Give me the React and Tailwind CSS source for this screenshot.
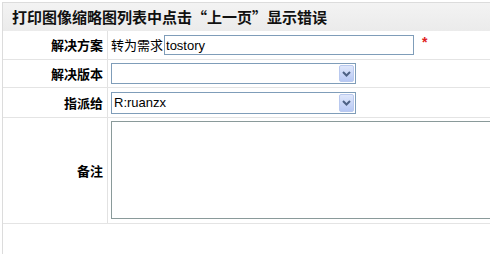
import React from 'react';

const cjk = { fontFamily: '"Noto Sans CJK SC", "Liberation Sans", sans-serif' };

const Chevron = () => (
  <svg width="9" height="6" viewBox="0 0 9 6">
    <path d="M1 1 L4.5 4.5 L8 1" fill="none" stroke="#4d6185" strokeWidth="2" />
  </svg>
);

const Select = ({ value, h }) => (
  <div className={`flex w-[245px] ${h} border border-[#7f9db9] bg-white`}>
    <div className="flex-1 flex items-center pl-[2px] text-[13px] text-black font-['Liberation_Sans',sans-serif]">
      {value}
    </div>
    <div className="w-[15px] m-[1px] flex items-center justify-center rounded-[2px] border border-[#b9c9ef] bg-gradient-to-b from-[#dfe7fb] to-[#b7c8f4]">
      <Chevron />
    </div>
  </div>
);

const Row = ({ label, height, children, align = 'items-center' }) => (
  <div className={`flex ${height} border-b border-[#e4e4e4]`}>
    <div
      className="w-[105px] shrink-0 flex items-center justify-end pr-[4px] border-r border-[#e2e2e2] text-[13px] font-bold text-black"
      style={cjk}
    >
      {label}
    </div>
    <div className={`flex-1 flex ${align} pl-[3px]`}>{children}</div>
  </div>
);

export default function App() {
  return (
    <div className="w-[490px] h-[254px] overflow-hidden bg-white pt-[2px] pl-[2px]">
      <div className="w-[540px] h-[260px] border-l border-t border-[#dcdcdc]">
        <div
          className="h-[28px] flex items-center pl-[9px] bg-gradient-to-b from-[#f3f3f3] to-[#ebebeb] text-[15px] font-bold text-[#111]"
          style={cjk}
        >
          打印图像缩略图列表中点击“上一页”显示错误
        </div>

        <Row label="解决方案" height="h-[29px]">
          <span className="text-[13px] text-black" style={cjk}>转为需求</span>
          <input
            defaultValue="tostory"
            className="ml-[1px] w-[250px] h-[20px] border border-[#7f9db9] px-[1px] text-[13px] text-black outline-none font-['Liberation_Sans',sans-serif]"
          />
          <span className="ml-[8px] -mt-[6px] text-[14px] font-bold text-[#e02020] font-['Liberation_Sans',sans-serif]">*</span>
        </Row>

        <Row label="解决版本" height="h-[28px]">
          <Select value="" h="h-[21px]" />
        </Row>

        <Row label="指派给" height="h-[30px]">
          <Select value="R:ruanzx" h="h-[22px]" />
        </Row>

        <Row label="备注" height="h-[106px]" align="items-start">
          <textarea className="mt-[3px] w-[420px] h-[98px] border border-[#8a9a9a] resize-none outline-none" />
        </Row>
      </div>
    </div>
  );
}
